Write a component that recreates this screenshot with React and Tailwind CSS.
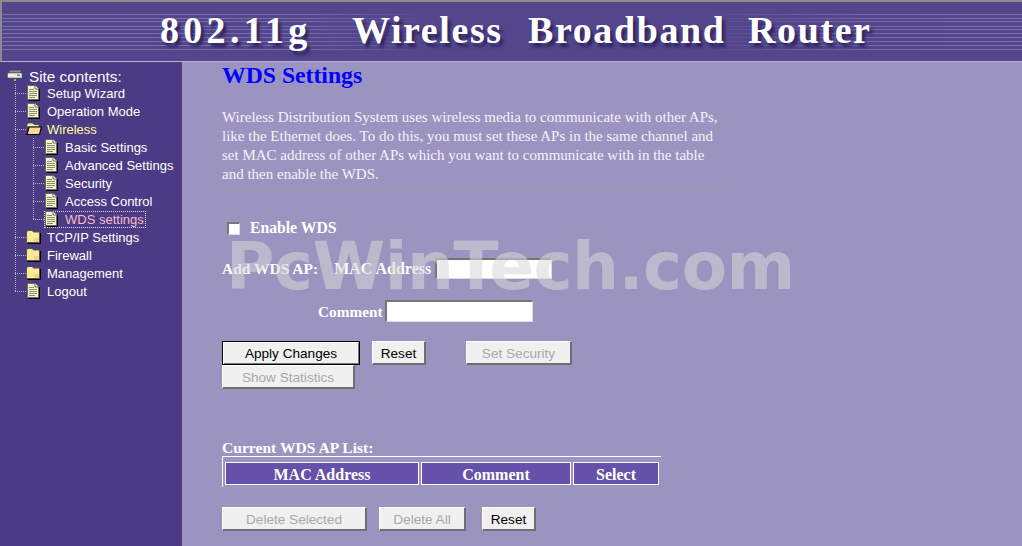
const headerLines = [14, 18, 21, 26, 29, 33, 37, 41, 45, 49]

function HeaderStripes() {
  return (
    <svg className="absolute inset-0 h-full w-full" aria-hidden="true">
      <defs>
        <linearGradient id="stripeFade" x1="0" y1="0" x2="1" y2="0">
          <stop offset="0" stopColor="#8d84b8" stopOpacity="0.7" />
          <stop offset="0.3" stopColor="#8d84b8" stopOpacity="0.6" />
          <stop offset="0.42" stopColor="#8d84b8" stopOpacity="0" />
          <stop offset="0.68" stopColor="#8d84b8" stopOpacity="0" />
          <stop offset="0.85" stopColor="#8d84b8" stopOpacity="0.6" />
          <stop offset="1" stopColor="#8d84b8" stopOpacity="0.7" />
        </linearGradient>
      </defs>
      {headerLines.map((y) => (
        <rect key={y} x="0" y={y - 2} width="100%" height="1" fill="url(#stripeFade)" />
      ))}
    </svg>
  )
}

function DocIcon() {
  return (
    <svg width="13" height="16" viewBox="0 0 13 16" className="shrink-0">
      <path d="M0.5 0.5H8L11.5 4V14.5H0.5Z" fill="#f6f4c6" stroke="#6b6b60" strokeWidth="1" />
      <path d="M8 0.5V4H11.5" fill="#fff" stroke="#6b6b60" strokeWidth="1" />
      <path d="M12.5 4V15.5H1.5" fill="none" stroke="#000" strokeWidth="1" />
      <path d="M2 4.5H7M2 6.5H10M2 8.5H10M2 10.5H10M2 12.5H8" stroke="#8a8a78" strokeWidth="1" />
    </svg>
  )
}

function FolderIcon({ open }) {
  if (open) {
    return (
      <svg width="16" height="14" viewBox="0 0 16 14" className="-ml-px shrink-0">
        <path d="M1 2.5L2.5 1H6.5L8 2.5H13V5H1Z" fill="#f8efa8" stroke="#4a4a40" strokeWidth="0.8" />
        <path d="M1 12.5L3 5H15.5L13.5 12.5Z" fill="#f8d89a" stroke="#000" strokeWidth="1.2" />
      </svg>
    )
  }
  return (
    <svg width="15" height="14" viewBox="0 0 15 14" className="-ml-px shrink-0">
      <path d="M0.5 12.5V2L2 0.5H6L7.5 2H13.5V12.5Z" fill="#fbeb96" stroke="#55554a" strokeWidth="1" />
      <path d="M14.5 3V13.5H1.5" fill="none" stroke="#000" strokeWidth="1" />
      <rect x="8" y="8" width="5" height="4" fill="#f6cf8a" />
    </svg>
  )
}

function RouterIcon() {
  return (
    <svg width="16" height="14" viewBox="0 0 16 14" className="shrink-0">
      <path d="M3 1H15L13 4H1Z" fill="#8c8c8c" stroke="#333" strokeWidth="0.6" />
      <rect x="0.5" y="4" width="14.5" height="5" fill="#ececec" stroke="#555" strokeWidth="0.6" />
      <rect x="10" y="5.5" width="3" height="1.5" fill="#3fa34a" />
      <rect x="7" y="10" width="2" height="2" fill="#f09a20" />
    </svg>
  )
}

// dotted tree connectors for one row
function Connector({ depth, last }) {
  const x = depth === 1 ? 15 : 33
  const width = depth === 1 ? 27 : 45
  return (
    <svg width={width} height="18" className="shrink-0" aria-hidden="true">
      {depth === 2 && <line x1="15.5" y1="0" x2="15.5" y2="18" stroke="#b8b4cc" strokeDasharray="1 1" />}
      <line x1={x + 0.5} y1="0" x2={x + 0.5} y2={last ? 9 : 18} stroke="#b8b4cc" strokeDasharray="1 1" />
      <line x1={x} y1="9.5" x2={width} y2="9.5" stroke="#b8b4cc" strokeDasharray="1 1" />
    </svg>
  )
}

const tree = [
  { label: 'Setup Wizard', type: 'doc', depth: 1 },
  { label: 'Operation Mode', type: 'doc', depth: 1 },
  { label: 'Wireless', type: 'open', depth: 1, open: true },
  { label: 'Basic Settings', type: 'doc', depth: 2 },
  { label: 'Advanced Settings', type: 'doc', depth: 2 },
  { label: 'Security', type: 'doc', depth: 2 },
  { label: 'Access Control', type: 'doc', depth: 2 },
  { label: 'WDS settings', type: 'doc', depth: 2, last: true, active: true },
  { label: 'TCP/IP Settings', type: 'folder', depth: 1 },
  { label: 'Firewall', type: 'folder', depth: 1 },
  { label: 'Management', type: 'folder', depth: 1 },
  { label: 'Logout', type: 'doc', depth: 1, last: true },
]

function TreeRow({ item }) {
  let color = 'text-white'
  if (item.open) color = 'text-[#ffff99]'
  if (item.active) color = 'text-[#f6bccb]'
  return (
    <div className="flex h-[18px] items-center">
      <Connector depth={item.depth} last={item.last} />
      <div
        className={
          'flex h-[17px] items-center ' + (item.active ? '-ml-px border border-dotted border-[#d8d4e8] pr-px' : '')
        }
      >
        {item.type === 'doc' && <DocIcon />}
        {item.type === 'open' && <FolderIcon open />}
        {item.type === 'folder' && <FolderIcon />}
        <span
          className={
            'whitespace-nowrap pt-px text-[13px] leading-[16px] ' +
            color +
            (item.type === 'open' ? ' ml-[5px]' : item.type === 'folder' ? ' ml-[6px]' : ' ml-[7px]')
          }
        >
          {item.label}
        </span>
      </div>
    </div>
  )
}

function Sidebar() {
  return (
    <aside className="w-[182px] shrink-0 bg-[#4b3a84] pt-[6px] font-['Liberation_Sans',sans-serif]">
      <div className="flex h-[16px] items-center pl-[7px]">
        <RouterIcon />
        <span className="ml-[6px] pt-px text-[15.3px] leading-[16px] text-white">Site contents:</span>
      </div>
      {tree.map((item) => (
        <TreeRow key={item.label} item={item} />
      ))}
    </aside>
  )
}

function WinButton({ children, disabled, primary, className = '' }) {
  return (
    <button
      type="button"
      disabled={disabled}
      className={
        'h-[24px] bg-[#f0f0f0] text-[13.6px] leading-none font-["Liberation_Sans",sans-serif] ' +
        (primary
          ? 'border border-black pt-px shadow-[inset_1px_1px_0_#fff,inset_-1px_-1px_0_#777] '
          : 'border-t border-l border-t-white border-l-white border-r-2 border-b-2 border-r-[#6e6e6e] border-b-[#6e6e6e] pt-[2px] ') +
        (disabled ? 'text-[#a8a8a8] ' : 'text-black ') +
        className
      }
    >
      {children}
    </button>
  )
}

function TextBox({ className = '' }) {
  return (
    <input
      type="text"
      className={
        'border-t-2 border-l-2 border-r border-b border-t-[#767676] border-l-[#767676] border-r-[#dcdcdc] border-b-[#dcdcdc] bg-white ' +
        className
      }
    />
  )
}

function HeadCell({ children, className = '' }) {
  return (
    <div
      className={
        'flex h-[23px] items-center justify-center border border-white bg-[#6651aa] pt-[2px] text-[16px] font-bold text-white ' +
        className
      }
    >
      {children}
    </div>
  )
}

export default function App() {
  return (
    <div className="relative flex h-[546px] w-[1022px] flex-col overflow-hidden bg-[#9c94c0] font-['Liberation_Serif',serif]">
      <header className="relative h-[62px] shrink-0 border-t-2 border-l-2 border-b border-t-[#8c8c8c] border-l-[#8c8c8c] border-b-[#b6b0d2] bg-[#53468c]">
        <HeaderStripes />
        <h1 className="relative flex pt-[6px] pl-[158px] text-[38px] leading-[44px] font-bold tracking-[1.6px] whitespace-nowrap text-white [text-shadow:3px_4px_3px_#2e2560]">
          <span className="w-[192px] tracking-[4.3px]">802.11g</span>
          <span className="w-[176px]">Wireless</span>
          <span className="w-[220px]">Broadband</span>
          <span>Router</span>
        </h1>
      </header>

      <div className="flex flex-1">
        <Sidebar />

        <main className="flex-1 pl-[40px] text-white">
          <h2 className="text-[23.7px] leading-[26px] font-bold text-[#0000ff]">WDS Settings</h2>

          <p className="mt-[20px] w-[498px] text-[15px] leading-[19px] text-[#f4f2fa]">
            Wireless Distribution System uses wireless media to communicate with other APs, like the Ethernet does. To
            do this, you must set these APs in the same channel and set MAC address of other APs which you want to
            communicate with in the table and then enable the WDS.
          </p>
          <div className="mt-[5px] h-px w-[498px] bg-[#a09ca0]" />

          <div className="mt-[28px] flex h-[20px] items-center pl-[5px] text-[15.7px] font-bold">
            <span className="h-[13px] w-[13px] border-t-2 border-l-2 border-r border-b border-t-[#777] border-l-[#777] border-r-[#ddd] border-b-[#ddd] bg-white" />
            <span className="ml-[10px]">Enable WDS</span>
          </div>

          <div className="mt-[19px] flex h-[22px] items-center font-bold">
            <span className="mt-[2px] text-[15.5px]">Add WDS AP:</span>
            <span className="mt-[2px] ml-[16px] text-[16px]">MAC Address</span>
            <TextBox className="ml-[4px] h-[21px] w-[117px]" />
          </div>

          <div className="mt-[21px] flex h-[22px] items-center pl-[96px] text-[15.3px] font-bold">
            <span className="mt-[2px]">Comment</span>
            <TextBox className="ml-[2px] h-[22px] w-[148px]" />
          </div>

          <div className="mt-[19px] flex items-start">
            <WinButton primary className="w-[138px]">Apply Changes</WinButton>
            <WinButton className="ml-[12px] w-[54px]">Reset</WinButton>
            <WinButton disabled className="ml-[40px] w-[106px]">Set Security</WinButton>
          </div>
          <WinButton disabled className="block w-[133px]">Show Statistics</WinButton>

          <div className="mt-[50px] text-[15.6px] leading-[17px] font-bold">Current WDS AP List:</div>
          <div className="flex h-[31px] w-[439px] gap-[2px] border-t border-l border-t-white border-l-white pt-[5px] pl-[2px]">
            <HeadCell className="w-[194px]">MAC Address</HeadCell>
            <HeadCell className="w-[150px]">Comment</HeadCell>
            <HeadCell className="w-[86px]">Select</HeadCell>
          </div>

          <div className="mt-[20px] flex items-start">
            <WinButton disabled className="w-[145px]">Delete Selected</WinButton>
            <WinButton disabled className="ml-[12px] w-[87px]">Delete All</WinButton>
            <WinButton className="ml-[16px] w-[54px]">Reset</WinButton>
          </div>
        </main>
      </div>

      {/* site watermark sits over the form */}
      <div className="pointer-events-none absolute top-[225px] left-[226px] font-['DejaVu_Sans',sans-serif] text-[66px] leading-[84px] font-bold tracking-[-0.5px] whitespace-nowrap text-[#d7d7d7]/55">
        PcWinTech.com
      </div>
    </div>
  )
}
